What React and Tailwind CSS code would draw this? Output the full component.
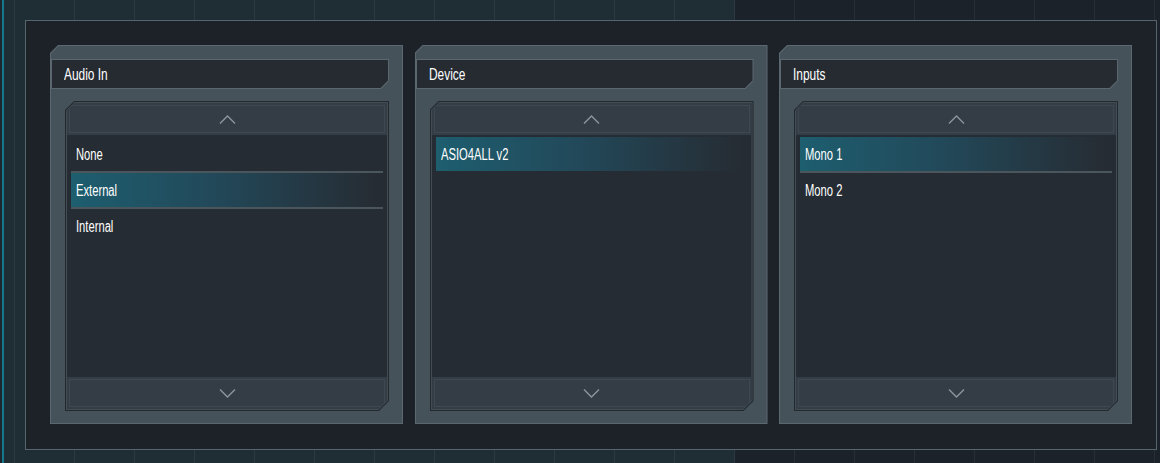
import React from 'react';

const panels = [
    { title: 'Audio In', items: ['None', 'External', 'Internal'], selected: 1 },
    { title: 'Device', items: ['ASIO4ALL v2'], selected: 0 },
    { title: 'Inputs', items: ['Mono 1', 'Mono 2'], selected: 0 },
];

const Label = ({ children, size = 'text-[16px]' }) => (
    <span className={`inline-block origin-left scale-x-[0.7] whitespace-nowrap leading-none text-white ${size}`}>
        {children}
    </span>
);

const Chevron = ({ up }) => (
    <svg width="17" height="9" viewBox="0 0 17 9" fill="none">
        <path
            d={up ? 'M1 8.5 L8.5 1 L16 8.5' : 'M1 0.5 L8.5 8 L16 0.5'}
            stroke="#8c969c"
            strokeWidth="1.4"
        />
    </svg>
);

const ScrollButton = ({ up }) => (
    <div className="h-[32px] bg-[#343d45] p-[2px]">
        <div className="h-full border border-[#3e4850] flex items-center justify-center">
            <Chevron up={up} />
        </div>
    </div>
);

const Panel = ({ title, items, selected }) => (
    <div className="w-[353px] h-[379px] bg-[#5c6870] p-px [clip-path:polygon(8px_0,100%_0,100%_100%,0_100%,0_8px)]">
        <div className="h-full bg-[#465259] pt-[13px] flex flex-col [clip-path:polygon(7.5px_0,100%_0,100%_100%,0_100%,0_7.5px)]">
            {/* Header */}
            <div className="h-[30px] mr-[13px] bg-[#5a676f] p-px [clip-path:polygon(0_0,100%_0,100%_calc(100%-8px),calc(100%-8px)_100%,0_100%)]">
                <div className="h-full bg-[#262b32] flex items-center pl-[12px] pt-px [clip-path:polygon(0_0,100%_0,100%_calc(100%-7.5px),calc(100%-7.5px)_100%,0_100%)]">
                    <Label size="text-[17px]">{title}</Label>
                </div>
            </div>

            {/* List frame */}
            <div className="mt-[12px] ml-[14px] mr-[13px] h-[310px] bg-[#22282e] p-px [clip-path:polygon(9px_0,100%_0,100%_calc(100%-10px),calc(100%-10px)_100%,0_100%,0_9px)]">
                <div className="h-full bg-[#414c53] p-px [clip-path:polygon(8.5px_0,100%_0,100%_calc(100%-9.5px),calc(100%-9.5px)_100%,0_100%,0_8.5px)]">
                    <div className="h-full bg-[#262c33] flex flex-col [clip-path:polygon(8px_0,100%_0,100%_calc(100%-9px),calc(100%-9px)_100%,0_100%,0_8px)]">
                        <ScrollButton up />
                        <div className="flex-1 px-[4px] pt-[2px] flex flex-col">
                            {items.map((item, i) => (
                                <div key={item}>
                                    <div
                                        className={`h-[34px] flex items-center pl-[5px] pt-[2px] ${i === selected ? 'bg-[linear-gradient(to_right,#1d5e6f,#22495a_45%,#262c33_98%)]' : ''}`}
                                    >
                                        <Label>{item}</Label>
                                    </div>
                                    {i < items.length - 1 && (
                                        <div
                                            className={`h-[2px] ${i === selected || i + 1 === selected ? 'bg-[#4a555c]' : ''}`}
                                        />
                                    )}
                                </div>
                            ))}
                        </div>
                        <ScrollButton />
                    </div>
                </div>
            </div>
        </div>
    </div>
);

const App = () => {
    return (
        <div
            className="w-[1160px] h-[463px] overflow-hidden bg-[linear-gradient(to_right,#1c262c_2px,#16788c_2px,#16788c_4px,#1f2d35_4px,#1f2d35_735px,#1c2229_735px)]"
            style={{ fontFamily: '"Liberation Sans", Arial, sans-serif' }}
        >
            <div className="w-full h-full pt-[20px] pl-[25px] bg-[linear-gradient(to_right,rgba(255,255,255,0.055)_1px,transparent_1px)] bg-[size:60px_100%] bg-[position:14px_0]">
                <div className="w-[1132px] h-[430px] border border-[#56656d] bg-[#1d2229] pt-[24px] pl-[24px] flex gap-[11.5px] items-start">
                    {panels.map((p) => (
                        <Panel key={p.title} {...p} />
                    ))}
                </div>
            </div>
        </div>
    );
};

export default App;
